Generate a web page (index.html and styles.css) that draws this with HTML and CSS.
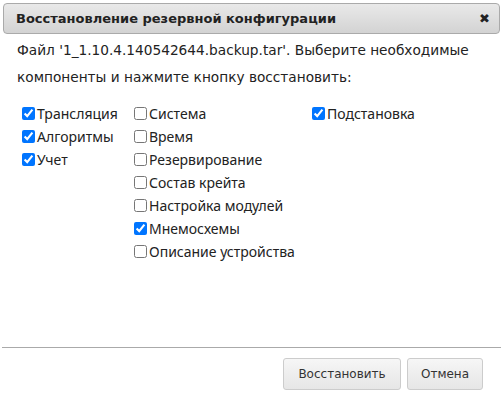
FILE: index.html
```html
<!DOCTYPE html>
<html lang="ru">
<head>
<meta charset="utf-8">
<link rel="stylesheet" href="styles.css">
</head>
<body>
<div class="dialog">
  <div class="titlebar">
    <span class="title">Восстановление резервной конфигурации</span>
    <span class="close">✖</span>
  </div>
  <div class="content">
    <p class="desc">Файл '1_1.10.4.140542644.backup.tar'. Выберите необходимые компоненты и нажмите кнопку восстановить:</p>
    <div class="options">
      <div class="col col1">
        <label class="opt"><input type="checkbox" checked>Трансляция</label>
        <label class="opt"><input type="checkbox" checked>Алгоритмы</label>
        <label class="opt"><input type="checkbox" checked>Учет</label>
      </div>
      <div class="col col2">
        <label class="opt"><input type="checkbox">Система</label>
        <label class="opt"><input type="checkbox">Время</label>
        <label class="opt"><input type="checkbox">Резервирование</label>
        <label class="opt"><input type="checkbox">Состав крейта</label>
        <label class="opt"><input type="checkbox">Настройка модулей</label>
        <label class="opt"><input type="checkbox" checked>Мнемосхемы</label>
        <label class="opt"><input type="checkbox">Описание устройства</label>
      </div>
      <div class="col col3">
        <label class="opt"><input type="checkbox" checked>Подстановка</label>
      </div>
    </div>
  </div>
  <div class="footer">
    <button class="btn btn-restore">Восстановить</button>
    <button class="btn btn-cancel">Отмена</button>
  </div>
</div>
</body>
</html>
```
FILE: styles.css
```css
* { box-sizing: border-box; }
html, body { margin: 0; padding: 0; background: #fff; }
body {
  width: 503px;
  height: 403px;
  font-family: "DejaVu Sans", Verdana, sans-serif;
  color: #222;
}
.dialog {
  padding: 3px 2px 0 2px;
  display: flex;
  flex-direction: column;
  height: 403px;
}
.titlebar {
  margin: 0 1px;
  height: 31px;
  border: 1px solid #aaa;
  border-radius: 4px;
  background: linear-gradient(#e9e9e9, #d3d3d3);
  display: flex;
  align-items: center;
  justify-content: space-between;
  padding: 0 9px 0 12px;
}
.title {
  font-weight: bold;
  font-size: 13px;
  color: #222;
}
.close {
  font-size: 13px;
  color: #222;
  font-weight: bold;
}
.content {
  flex: 1;
  padding: 0 15px;
}
.desc {
  margin: 3px 0 0 0;
  font-size: 13.7px;
  line-height: 27px;
  color: #222;
}
.options {
  margin-top: 11px;
  padding-left: 1px;
  display: grid;
  grid-template-columns: 112px 178px auto;
  font-family: "Noto Sans", "Open Sans", sans-serif;
  font-size: 14px;
  color: #222;
}
.col {
  display: flex;
  flex-direction: column;
}
.opt {
  display: flex;
  align-items: center;
  height: 23px;
  white-space: nowrap;
}
.opt input {
  margin: 0 2px 0 4px;
  width: 13px;
  height: 13px;
}
.footer {
  border-top: 1px solid #aaa;
  height: 56px;
  display: flex;
  justify-content: flex-end;
  align-items: flex-start;
  padding: 10px 18px 0 0;
  gap: 6px;
}
.btn {
  font-family: "DejaVu Sans", Verdana, sans-serif;
  font-size: 12px;
  color: #333;
  height: 32px;
  padding: 0 12px;
  border: 1px solid #ccc;
  border-radius: 3px;
  background: linear-gradient(#f6f6f6, #e6e6e6);
}
.btn-restore { width: 118px; }
.btn-cancel { width: 76px; }
```
